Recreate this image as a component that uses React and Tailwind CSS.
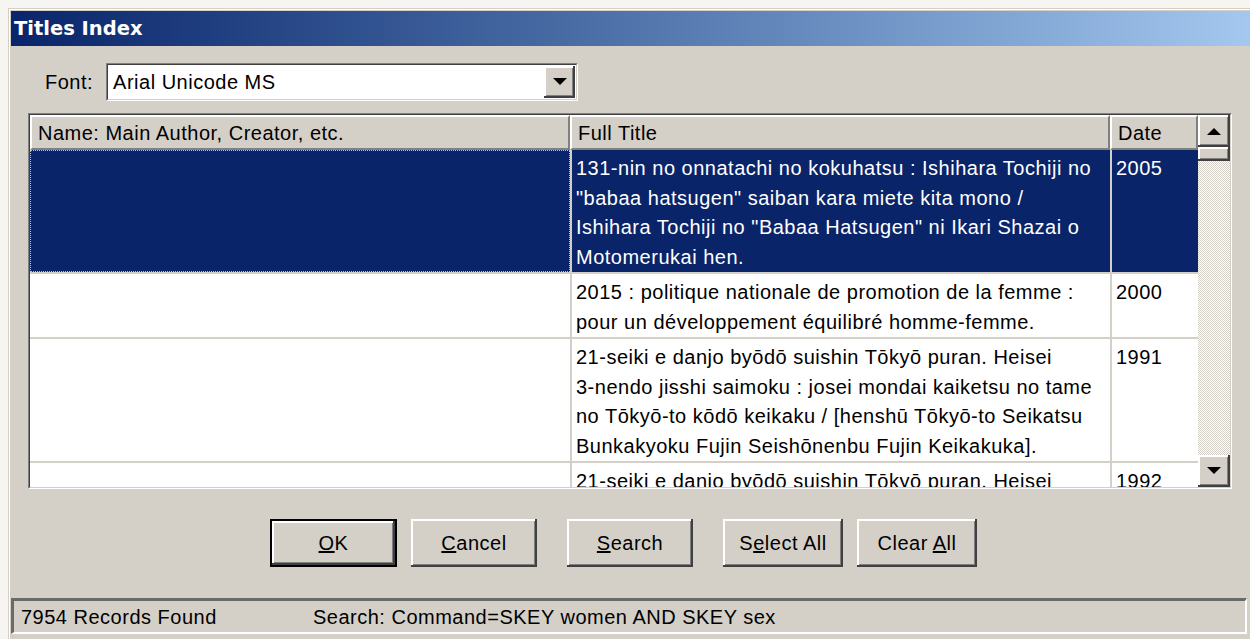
import React from 'react';

const raised = 'bg-[#d4d0c8] shadow-[inset_-2px_-2px_#404040,inset_2px_2px_#ffffff,inset_-3px_-3px_#808080]';

const rows = [
  {
    selected: true,
    title: [
      '131-nin no onnatachi no kokuhatsu : Ishihara Tochiji no',
      '"babaa hatsugen" saiban kara miete kita mono /',
      'Ishihara Tochiji no "Babaa Hatsugen" ni Ikari Shazai o',
      'Motomerukai hen.',
    ],
    date: '2005',
  },
  {
    title: [
      '2015 : politique nationale de promotion de la femme :',
      'pour un développement équilibré homme-femme.',
    ],
    date: '2000',
  },
  {
    title: [
      '21-seiki e danjo byōdō suishin Tōkyō puran. Heisei',
      '3-nendo jisshi saimoku : josei mondai kaiketsu no tame',
      'no Tōkyō-to kōdō keikaku / [henshū Tōkyō-to Seikatsu',
      'Bunkakyoku Fujin Seishōnenbu Fujin Keikakuka].',
    ],
    date: '1991',
  },
  {
    title: ['21-seiki e danjo byōdō suishin Tōkyō puran. Heisei'],
    date: '1992',
  },
];

function Arrow({ down }) {
  return (
    <svg width="14" height="8" viewBox="0 0 14 8">
      {down ? <polygon points="0,0 14,0 7,7" fill="#000" /> : <polygon points="0,8 14,8 7,1" fill="#000" />}
    </svg>
  );
}

function Button({ children, isDefault, w }) {
  if (isDefault) {
    return (
      <div className={`${w} h-[48px] border-2 border-black flex`}>
        <div className={`flex-1 flex items-center justify-center ${raised}`}>{children}</div>
      </div>
    );
  }
  return <div className={`${w} h-[48px] flex items-center justify-center ${raised}`}>{children}</div>;
}

function HeaderCell({ children, w }) {
  return (
    <div className={`${w} h-[35px] flex items-center pl-[6px] bg-[#d4d0c8] border-t-2 border-l-2 border-t-white border-l-white border-r-2 border-b-2 border-r-[#808080] border-b-[#808080]`}>
      {children}
    </div>
  );
}

function Row({ row }) {
  const sel = row.selected;
  return (
    <div className={`flex border-b-2 border-[#d4d0c8] ${sel ? 'bg-[#0a246a] text-white' : 'bg-white text-black'}`}>
      <div className={`w-[540px] shrink-0 ${sel ? 'border border-dotted border-[#d8c878]' : ''}`} />
      <div className="w-[540px] shrink-0 border-l-2 border-[#d4d0c8] pl-[4px] pt-[4px] leading-[29.5px] whitespace-nowrap overflow-hidden">
        {row.title.map((t, i) => (
          <div key={i}>{t}</div>
        ))}
      </div>
      <div className="w-[88px] shrink-0 border-l-2 border-[#d4d0c8] pl-[4px] pt-[4px] leading-[29.5px]">{row.date}</div>
    </div>
  );
}

export default function App() {
  return (
    <div className="w-[1250px] h-[639px] overflow-hidden bg-[#f6f5f2] pl-[8px] pt-[8px] font-['Liberation_Sans',Arial,sans-serif] text-[20px] tracking-[0.5px] text-black">
      <div className="w-[1260px] h-[640px] border-l border-t border-[#d4d0c8]">
        <div className="h-full border-l border-t border-white">
          <div className="h-full border-l border-t border-[#d4d0c8] bg-[#d4d0c8] flex flex-col">
            {/* title bar */}
            <div className="h-[35px] shrink-0 bg-gradient-to-r from-[#0a246a] to-[#a6caf0] flex items-center pl-[3px]">
              <span className="font-['DejaVu_Sans',sans-serif] font-bold text-[19.5px] tracking-normal text-white">Titles Index</span>
            </div>

            {/* font picker */}
            <div className="flex items-center pt-[17px] pl-[34px] gap-[13px]">
              <span>Font:</span>
              <div className="w-[472px] h-[38px] border border-t-[#808080] border-l-[#808080] border-r-white border-b-white">
                <div className="h-full flex items-center border border-t-[#404040] border-l-[#404040] border-r-[#d4d0c8] border-b-[#d4d0c8] bg-white">
                  <span className="flex-1 pl-[5px]">Arial Unicode MS</span>
                  <div className={`w-[31px] h-[32px] mr-[1px] flex items-center justify-center ${raised}`}>
                    <Arrow down />
                  </div>
                </div>
              </div>
            </div>

            {/* titles list */}
            <div className="mt-[12px] ml-[17px] w-[1204px] h-[376px] border border-t-[#808080] border-l-[#808080] border-r-white border-b-white">
              <div className="h-full flex border border-t-[#404040] border-l-[#404040] border-r-[#d4d0c8] border-b-[#d4d0c8] bg-white">
                <div className="w-[1168px] flex flex-col">
                  <div className="flex shrink-0">
                    <HeaderCell w="w-[540px]">Name: Main Author, Creator, etc.</HeaderCell>
                    <HeaderCell w="w-[540px]">Full Title</HeaderCell>
                    <HeaderCell w="w-[88px]">Date</HeaderCell>
                  </div>
                  <div className="flex-1 overflow-hidden">
                    {rows.map((r, i) => (
                      <Row key={i} row={r} />
                    ))}
                  </div>
                </div>
                <div className="w-[32px] flex flex-col">
                  <div className={`h-[32px] shrink-0 flex items-center justify-center ${raised}`}>
                    <Arrow />
                  </div>
                  <div className={`h-[14px] shrink-0 ${raised}`} />
                  <div className="flex-1 bg-[repeating-conic-gradient(#d4d0c8_0%_25%,#ffffff_0%_50%)] bg-size-[2px_2px]" />
                  <div className={`h-[32px] shrink-0 flex items-center justify-center ${raised}`}>
                    <Arrow down />
                  </div>
                </div>
              </div>
            </div>

            {/* buttons */}
            <div className="flex mt-[30px] ml-[259px]">
              <Button isDefault w="w-[127px]">
                <span><u>O</u>K</span>
              </Button>
              <div className="w-[14px]" />
              <Button w="w-[126px]">
                <span><u>C</u>ancel</span>
              </Button>
              <div className="w-[30px]" />
              <Button w="w-[126px]">
                <span><u>S</u>earch</span>
              </Button>
              <div className="w-[30px]" />
              <Button w="w-[120px]">
                <span>S<u>e</u>lect All</span>
              </Button>
              <div className="w-[14px]" />
              <Button w="w-[120px]">
                <span>Clear <u>A</u>ll</span>
              </Button>
            </div>

            {/* status bar */}
            <div className="mt-[31px] w-[1236px] h-[36px] border-t-[3px] border-l-[3px] border-[#6a6a6a] border-r-2 border-b-2 border-r-white border-b-white flex items-center pl-[7px]">
              <span className="w-[292px]">7954 Records Found</span>
              <span>Search: Command=SKEY women AND SKEY sex</span>
            </div>
          </div>
        </div>
      </div>
    </div>
  );
}
